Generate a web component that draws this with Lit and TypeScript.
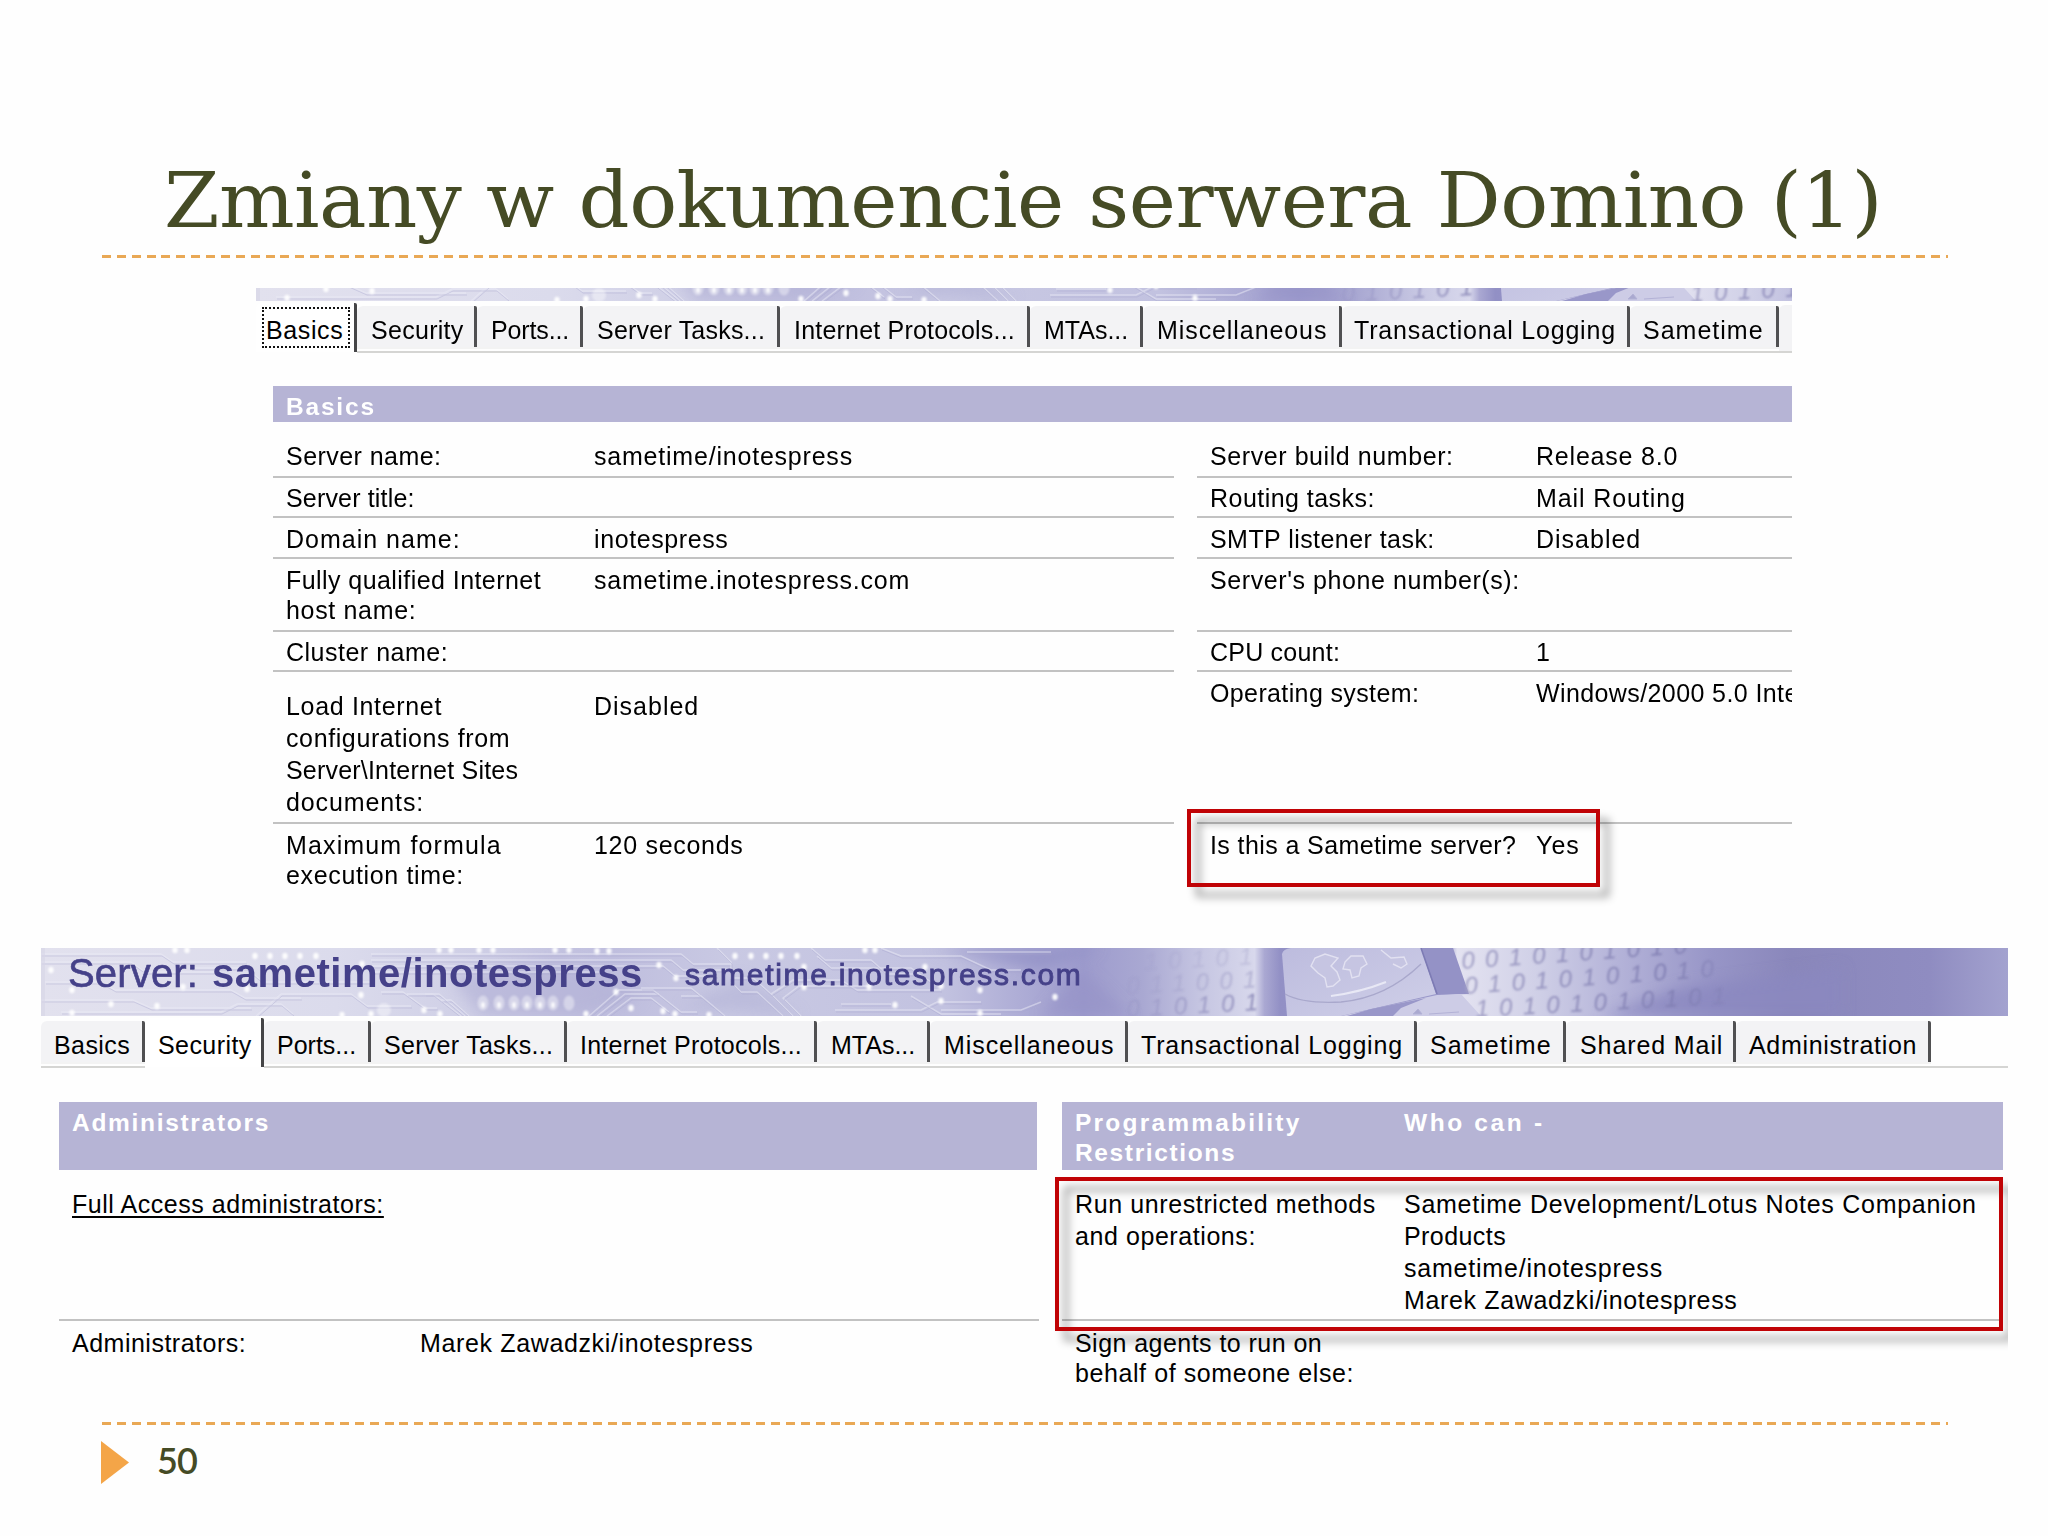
import { LitElement, html, svg, css, nothing } from "lit";
import { customElement, property } from "lit/decorators.js";
import { styleMap } from "lit/directives/style-map.js";

/** One line of text whose tracking is adjusted so that it spans `w` pixels. */
@customElement("fit-text")
class FitText extends LitElement {
  @property() text = "";
  @property({ type: Number }) w = 0;

  static styles = css`
    :host { display: block; white-space: pre; }
    .line { display: inline-block; }
  `;

  updated() {
    const el = this.renderRoot.querySelector(".line") as HTMLElement;
    el.style.letterSpacing = "0px";
    const natural = el.offsetWidth;
    const gaps = this.text.length - 1;
    if (this.w && gaps > 0) {
      el.style.letterSpacing = `${(this.w - natural) / gaps}px`;
      el.style.marginRight = `${-(this.w - natural) / gaps}px`;
    }
  }

  render() {
    return html`<span class="line" part="line">${this.text}</span>`;
  }
}

/** Decorative circuit-board banner; `top` and `span` choose the visible slice. */
@customElement("circuit-banner")
class CircuitBanner extends LitElement {
  @property({ type: Number }) top = 0;
  @property({ type: Number }) span = 1967;

  static styles = css`
    :host { display: block; }
    .art { display: block; width: 100%; height: 100%; }
    .digits { font: italic 24px "Liberation Sans", sans-serif; letter-spacing: 10.3px; }
  `;

  render() {
    const h = 68 - this.top;
    const dots: number[][] = [
      [214, 8], [229, 8], [244, 8], [259, 8], [275, 8], [134, 2], [146, 2], [10, 22], [70, 56], [116, 58],
      [31, 42], [31, 65], [142, 39], [321, 16], [206, 41], [320, 47], [330, 66], [383, 62], [399, 66], [301, 67],
      [398, 2], [410, 2], [438, 2], [452, 2], [514, 2], [528, 2], [556, 3], [568, 3], [618, 17], [635, 30],
      [575, 44], [590, 60], [622, 63], [634, 66], [694, 8], [710, 8], [725, 8], [740, 8], [756, 8],
      [824, 2], [834, 2], [884, 19], [763, 19], [763, 39], [828, 39], [854, 57], [900, 53], [900, 38], [939, 42],
      [939, 65], [1014, 49], [668, 67], [545, 66],
    ];
    const lines = [
      "M0 6H120L132 14H205", "M0 14H90L104 24H180", "M4 34H60L74 42H190L204 50H260", "M0 52H92L110 60H210",
      "M20 64H180L196 56H240L252 66", "M150 20H205L222 34H330", "M215 68L240 46H310L326 58H370",
      "M330 6H640L652 16H690", "M330 12H630L642 22H690", "M330 18H622L634 28H676", "M330 24H560L575 34",
      "M340 44H362L384 60H396", "M366 46H392L420 68", "M384 46H398L424 68", "M400 52H410L428 68",
      "M556 68L584 46H618", "M548 68L578 42H612L640 64H656", "M566 68L590 50H610L628 64", "M600 40H650L672 58",
      "M676 0L690 14V30H712L730 46", "M684 68L660 48H640", "M770 0L784 12H830L846 26H876",
      "M776 8L790 20H870L890 34", "M742 68L716 44H700L690 34", "M752 68L730 46L752 32H800L816 42H900",
      "M760 68L742 50L758 38H830", "M800 56H850", "M794 62H880L896 54H940", "M840 0L860 8H920L950 22H980",
      "M900 62H980L1000 54", "M926 4H1010", "M870 48L900 66H960",
    ];
    return svg`<svg class="art" viewBox="0 ${this.top} ${this.span} ${h}" preserveAspectRatio="none" aria-hidden="true">
      <defs>
        <linearGradient id="base" gradientUnits="userSpaceOnUse" x1="0" y1="0" x2="1967" y2="0">
          <stop offset="0" stop-color="#e2e1ee"/><stop offset=".15" stop-color="#dbdbec"/>
          <stop offset=".22" stop-color="#cfcfe6"/><stop offset=".29" stop-color="#bfbede"/>
          <stop offset=".35" stop-color="#c9c9e3"/><stop offset=".46" stop-color="#c2c2e0"/>
          <stop offset=".53" stop-color="#9d9bcd"/><stop offset=".56" stop-color="#a9a8d2"/>
          <stop offset=".59" stop-color="#c6c6e2"/><stop offset=".617" stop-color="#d8d8ec"/>
          <stop offset=".622" stop-color="#aaa8d2"/><stop offset=".63" stop-color="#9290c5"/>
          <stop offset=".715" stop-color="#9c9acb"/><stop offset=".72" stop-color="#e4e3f1"/>
          <stop offset=".76" stop-color="#d0d0e7"/><stop offset=".80" stop-color="#b5b4d9"/>
          <stop offset=".85" stop-color="#9795c7"/><stop offset=".89" stop-color="#8a87bb"/>
          <stop offset=".96" stop-color="#8f8cc1"/><stop offset="1" stop-color="#a3a2cf"/>
        </linearGradient>
        <linearGradient id="ink" gradientUnits="userSpaceOnUse" x1="1420" y1="0" x2="1720" y2="0">
          <stop offset="0" stop-color="#a3a1c6"/><stop offset=".7" stop-color="#8280b4"/>
          <stop offset="1" stop-color="#7d7bb0" stop-opacity="0"/>
        </linearGradient>
        <linearGradient id="ink2" gradientUnits="userSpaceOnUse" x1="1090" y1="0" x2="1220" y2="0">
          <stop offset="0" stop-color="#8683b8" stop-opacity=".2"/><stop offset="1" stop-color="#8f8dba"/>
        </linearGradient>
        <linearGradient id="card" x1="0" y1="0" x2="1" y2="1">
          <stop offset="0" stop-color="#bdbcde"/><stop offset="1" stop-color="#cfcfe8"/>
        </linearGradient>
        <filter id="soft" x="-20%" y="-50%" width="140%" height="200%"><feGaussianBlur stdDeviation="7"/></filter>
        <filter id="dot" x="-100%" y="-100%" width="300%" height="300%"><feGaussianBlur stdDeviation=".8"/></filter>
      </defs>
      <rect width="1967" height="68" fill="url(#base)"/>
      <g filter="url(#soft)">
        <path d="M410 30L520 10L600 50L540 68H440Z" fill="#b0afd6" opacity=".6"/>
        <path d="M640 60L700 30L760 68Z" fill="#b0afd6" opacity=".5"/>
        <path d="M890 0H1060L1000 22Z" fill="#8f8dc4" opacity=".7"/>
        <path d="M1000 68L1040 20L1090 68Z" fill="#9593c7" opacity=".6"/>
        <path d="M1560 68L1640 40L1800 20V68Z" fill="#8b88bf" opacity=".8"/>
      </g>
      <g fill="none" stroke="#ebebf6" stroke-width="1.5" opacity=".5">
        ${lines.map((d) => svg`<path d=${d}/>`)}
      </g>
      <g fill="none" stroke="#a9a8cf" stroke-width="1" opacity=".4" transform="translate(1 2)">
        ${lines.map((d) => svg`<path d=${d}/>`)}
      </g>
      <g fill="#fff" opacity=".4" filter="url(#dot)">
        ${[442, 458, 473, 486, 499, 512, 528].map((x) => svg`<ellipse cx=${x} cy="55" rx="5.5" ry="7.5"/>`)}
        <ellipse cx="343" cy="62" rx="7" ry="7"/>
      </g>
      <g fill="#fff" opacity=".92" filter="url(#dot)">
        ${dots.map(([x, y]) => svg`<ellipse cx=${x} cy=${y} rx="2.7" ry="3.2"/>`)}
        ${[442, 458, 473, 486, 499, 512].map((x) => svg`<ellipse cx=${x} cy="57" rx="1.8" ry="3"/>`)}
      </g>
      <path d="M1379 0H1412L1428 46L1396 47Z" fill="#9492c6"/>
      <path d="M1241 6Q1242 1 1250 0H1380L1395 46L1300 68H1246Z" fill="url(#card)"/>
      <path d="M1244 46Q1262 56 1300 54Q1345 50 1380 16" fill="none" stroke="#a9a8cc" stroke-width="1.3"/>
      <path d="M1290 48Q1320 44 1345 34" fill="none" stroke="#e8e8f5" stroke-width="2"/>
      <path d="M1270 18L1274 10L1284 6L1297 10L1290 18L1296 24L1299 32L1292 38L1286 39L1284 30L1277 25ZM1304 14L1310 8L1322 8L1326 16L1320 20L1318 28L1311 30L1309 22L1302 21ZM1340 2L1350 10L1363 9L1366 16L1360 20L1352 16" fill="#c6c5e2" stroke="#e2e1f1" stroke-width="1.4"/>
      <path d="M1380 0L1396 46" stroke="#7d7bb4" stroke-width="1.6"/>
      <path d="M1300 68L1396 47L1420 46L1440 68Z" fill="#cdcce6"/>
      <path d="M1306 68L1330 61L1385 50L1360 60L1352 68Z" fill="#9997c9"/>
      <path d="M1372 66l5-5 4 5zM1388 66l30-2" fill="#aaa9d0" stroke="#b3b2d6"/>
      <g class="digits" fill="url(#ink)" filter="url(#dot)">
        <text x="1421" y="21" transform="rotate(-4 1421 21)">0010101010</text>
        <text x="1424" y="46" transform="rotate(-4 1424 46)">01010101010</text>
        <text x="1435" y="69" transform="rotate(-3 1435 69)">10101010101</text>
      </g>
      <g class="digits" fill="url(#ink2)" filter="url(#dot)">
        <text x="1104" y="22" opacity=".3" transform="rotate(-3 1104 22)">10101</text>
        <text x="1086" y="46" opacity=".5" transform="rotate(-3 1086 46)">011001</text>
        <text x="1086" y="69" transform="rotate(-3 1086 69)">010101</text>
      </g>
      <path d="M0 0H4V68H0Z" fill="#d7d6e6" opacity=".6"/>
    </svg>`;
  }
}

interface Tab { label: string; x: number; w: number; end: number }
interface Cell { lines: [string, number][]; value?: [string, number][]; h: number; pad: number; loose?: boolean; link?: boolean; bare?: boolean }

const tab = (label: string, x: number, right: number, end: number): Tab => ({ label, x, w: right - x, end });

/** Row of property-sheet tabs; each tab ends at its divider. */
@customElement("tab-strip")
class TabStrip extends LitElement {
  @property({ attribute: false }) tabs: Tab[] = [];
  @property({ type: Number }) origin = 0;
  @property({ type: Number }) active = 0;
  @property({ type: Boolean }) focused = false;
  @property({ type: Boolean }) more = false;

  static styles = css`
    :host { display: flex; height: 53px; font: 25px/30px "Liberation Sans", Arial, sans-serif; color: #000; }
    .tab { box-sizing: border-box; flex: none; height: 53px; display: flex; flex-direction: column; }
    .face { box-sizing: border-box; height: 41px; margin-top: 5px; padding-top: 9px; background: #f3f3f5;
      border-right: 3px solid #505052; border-radius: 6px 2px 0 0; }
    .foot { height: 2px; margin-top: 4px; background: #d5d5d3; box-shadow: 0 -4px 0 #f3f3f3; }
    .active .face { background: #fff; height: 49px; margin-top: 2px; padding-top: 12px; border-right-color: #454547; }
    .active .foot { display: none; }
    .focus .face { position: relative; }
    .focus .face::after { content: ""; position: absolute; left: 6px; top: 4px; width: 84px; height: 37px; border: 2px dotted #111; }
    .rest { flex: 1; display: flex; flex-direction: column; }
    .rest .pad { height: 50px; }
    .rest .line { height: 2px; background: #d5d5d3; }
    .rest.more .pad { background: #f3f3f5; height: 46px; margin-top: 4px; border-radius: 6px 0 0 0; }
  `;

  render() {
    let start = this.origin;
    return html`${this.tabs.map((t, i) => {
      const left = t.x - 1 - start;
      const width = t.end - start;
      start = t.end;
      const on = i === this.active;
      return html`<div class="tab ${on ? "active" : ""} ${on && this.focused ? "focus" : ""}" style=${styleMap({ width: `${width}px` })}>
        <div class="face" style=${styleMap({ paddingLeft: `${left}px` })}><fit-text .text=${t.label} .w=${t.w + 2}></fit-text></div>
        <div class="foot"></div>
      </div>`;
    })}<div class="rest ${this.more ? "more" : ""}"><div class="pad"></div><div class="line"></div></div>`;
  }
}

/** Column of label/value rows separated by thin rules. */
@customElement("field-list")
class FieldList extends LitElement {
  @property({ attribute: false }) rows: Cell[] = [];
  @property({ type: Number }) labelWidth = 300;

  static styles = css`
    :host { display: flex; flex-direction: column; font: 25px/30.5px "Liberation Sans", Arial, sans-serif; color: #000; }
    .row { box-sizing: border-box; flex: none; display: flex; padding-left: 13px; border-bottom: 2px solid #c2c2c2; }
    .loose { line-height: 32px; }
    .bare { border-bottom-color: transparent; }
    .label { flex: none; }
    .link fit-text::part(line) { text-decoration: underline; text-decoration-thickness: 2px; text-underline-offset: 3px; text-decoration-skip-ink: none; }
  `;

  render() {
    const block = (l?: [string, number][]) => l ? l.map(([t, w]) => html`<fit-text .text=${t} .w=${w + 2}></fit-text>`) : nothing;
    return html`${this.rows.map((r) => html`
      <div class="row ${r.loose ? "loose" : ""} ${r.bare ? "bare" : ""}" style=${styleMap({ height: `${r.h}px`, paddingTop: `${r.pad}px` })}>
        <div class="label ${r.link ? "link" : ""}" style=${styleMap({ width: `${this.labelWidth}px` })}>${block(r.lines)}</div>
        <div>${block(r.value)}</div>
      </div>`)}`;
  }
}

const BASICS_TABS = [
  tab("Basics", 267, 342, 357), tab("Security", 372, 462, 477), tab("Ports...", 492, 568, 583),
  tab("Server Tasks...", 598, 764, 780), tab("Internet Protocols...", 795, 1014, 1030), tab("MTAs...", 1045, 1127, 1143),
  tab("Miscellaneous", 1158, 1325, 1342), tab("Transactional Logging", 1355, 1614, 1630), tab("Sametime", 1644, 1762, 1779),
];

const SECURITY_TABS = [
  tab("Basics", 55, 129, 145), tab("Security", 159, 250, 264), tab("Ports...", 278, 355, 371),
  tab("Server Tasks...", 385, 552, 567), tab("Internet Protocols...", 581, 801, 817), tab("MTAs...", 832, 914, 930),
  tab("Miscellaneous", 945, 1112, 1128), tab("Transactional Logging", 1142, 1401, 1417), tab("Sametime", 1431, 1550, 1566),
  tab("Shared Mail", 1581, 1721, 1736), tab("Administration", 1750, 1915, 1931),
];

const BASICS_LEFT: Cell[] = [
  { lines: [["Server name:", 153]], value: [["sametime/inotespress", 256]], h: 56, pad: 19 },
  { lines: [["Server title:", 126]], h: 40, pad: 5 },
  { lines: [["Domain name:", 172]], value: [["inotespress", 132]], h: 41, pad: 6 },
  { lines: [["Fully qualified Internet", 253], ["host name:", 128]], value: [["sametime.inotespress.com", 313]], h: 73, pad: 5.5 },
  { lines: [["Cluster name:", 160]], h: 40, pad: 5 },
  { lines: [["Load Internet", 153], ["configurations from", 222], ["Server\\Internet Sites", 230], ["documents:", 135]],
    value: [["Disabled", 102]], h: 152, pad: 18, loose: true },
  { lines: [["Maximum formula", 213], ["execution time:", 175]], value: [["120 seconds", 147]], h: 76, pad: 5.5, bare: true },
];

const BASICS_RIGHT: Cell[] = [
  { lines: [["Server build number:", 241]], value: [["Release 8.0", 139]], h: 56, pad: 19 },
  { lines: [["Routing tasks:", 162]], value: [["Mail Routing", 147]], h: 40, pad: 5 },
  { lines: [["SMTP listener task:", 222]], value: [["Disabled", 102]], h: 41, pad: 6 },
  { lines: [["Server's phone number(s):", 307]], h: 73, pad: 5.5 },
  { lines: [["CPU count:", 128]], value: [["1", 8]], h: 40, pad: 5 },
  { lines: [["Operating system:", 207]], value: [["Windows/2000 5.0 Inte", 260]], h: 152, pad: 6 },
  { lines: [["Is this a Sametime server?", 304]], value: [["Yes", 41]], h: 76, pad: 5.5, bare: true },
];

const ADMIN_LEFT: Cell[] = [
  { lines: [["Full Access administrators:", 309]], h: 151, pad: 18, loose: true, link: true },
  { lines: [["Administrators:", 172]], value: [["Marek Zawadzki/inotespress", 331]], h: 76, pad: 7, bare: true },
];

const ADMIN_RIGHT: Cell[] = [
  { lines: [["Run unrestricted methods", 298], ["and operations:", 178]],
    value: [["Sametime Development/Lotus Notes Companion", 570], ["Products", 100], ["sametime/inotespress", 256], ["Marek Zawadzki/inotespress", 331]],
    h: 151, pad: 18, loose: true },
  { lines: [["Sign agents to run on", 245], ["behalf of someone else:", 276]], h: 76, pad: 6.5, bare: true },
];

@customElement("app-root")
class AppRoot extends LitElement {
  static styles = css`
    :host { display: block; width: 2048px; height: 1536px; overflow: hidden; background: #fefefe; }
    .slide { position: relative; display: flex; flex-direction: column; width: 2048px; height: 1536px; }
    .title { margin: 0; height: 255px; box-sizing: border-box; padding: 156px 0 0 164px;
      font: 400 76px/90px "DejaVu Serif", serif; color: #454b25; }
    .title fit-text { transform: scaleX(1.05); transform-origin: 0 0; }
    .rule { flex: none; width: 1846px; height: 3px; margin-left: 102px;
      background: repeating-linear-gradient(90deg, #e9a855 0 9px, transparent 9px 14.87px); }
    .shot { flex: none; overflow: hidden; }
    .first { width: 1536px; height: 612px; margin: 30px 0 0 256px; }
    .second { position: relative; width: 1967px; height: 450px; margin: 48px 0 0 41px; }
    .strip { height: 13px; }
    .bar { background: #b6b4d5; color: #fff; font: 700 24.5px/30px "Liberation Sans", Arial, sans-serif; box-sizing: border-box; }
    .first .bar { height: 36px; margin: 32px 0 0 17px; padding: 6px 0 0 13px; }
    .pair { display: flex; }
    .first .pair { gap: 23px; margin-left: 17px; }
    .first .left { width: 901px; flex: none; }
    .first .right { width: 595px; flex: none; }
    .head { position: relative; height: 68px; }
    .art { height: 68px; }
    .caption { position: absolute; inset: 0; display: flex; color: #454189; font-family: "Liberation Sans", Arial, sans-serif; }
    .kind { font-size: 40px; line-height: 46px; width: 171px; padding: 2px 0 0 27px; box-sizing: border-box; flex: none; -webkit-text-stroke: .6px #454189; }
    .name { font-size: 40px; line-height: 46px; width: 445px; padding-top: 2px; font-weight: 700; flex: none; }
    .host { font-size: 30px; line-height: 34px; padding-top: 10px; margin-left: 28px; -webkit-text-stroke: .9px #454189; }
    .bars { display: flex; margin: 33px 0 0 18px; gap: 25px; }
    .bars .bar { height: 68px; padding: 6px 0 0 13px; }
    .a { width: 978px; }
    .b { width: 941px; display: flex; }
    .b .what { width: 329px; flex: none; }
    .second .pair { margin-left: 18px; gap: 23px; }
    .second .left { width: 980px; flex: none; }
    .second .right { width: 941px; flex: none; }
    .mark { position: absolute; box-sizing: border-box; border: 4px solid #c00306; filter: drop-shadow(9px 10px 4px rgba(0, 0, 0, .4)); }
    .mark-a { left: 1187px; top: 809px; width: 413px; height: 78px; }
    .mark-b { left: 1014px; top: 229px; width: 948px; height: 154px; }
    .lower { margin-top: 24px; }
    .footer { display: flex; align-items: flex-start; padding: 16px 0 0 101px; gap: 28px; }
    .arrow { width: 28px; height: 43px; flex: none; }
    .page { font: 600 36px/43px Lato, sans-serif; color: #454b25; margin-top: -2px; }
  `;

  render() {
    return html`
      <main class="slide">
        <h1 class="title"><fit-text text="Zmiany w dokumencie serwera Domino (1)" .w=${1637}></fit-text></h1>
        <div class="rule"></div>

        <section class="shot first">
          <circuit-banner class="strip" .top=${55} .span=${1536}></circuit-banner>
          <tab-strip .tabs=${BASICS_TABS} .origin=${256} .active=${0} focused more></tab-strip>
          <div class="bar"><fit-text text="Basics" .w=${88}></fit-text></div>
          <div class="pair">
            <field-list class="left" .rows=${BASICS_LEFT} .labelWidth=${308}></field-list>
            <field-list class="right" .rows=${BASICS_RIGHT} .labelWidth=${326}></field-list>
          </div>
        </section>

        <section class="shot second">
          <div class="head">
            <circuit-banner class="art"></circuit-banner>
            <div class="caption">
              <fit-text class="kind" text="Server:" .w=${130}></fit-text>
              <fit-text class="name" text="sametime/inotespress" .w=${430}></fit-text>
              <fit-text class="host" text="sametime.inotespress.com" .w=${396}></fit-text>
            </div>
          </div>
          <tab-strip .tabs=${SECURITY_TABS} .origin=${41} .active=${1}></tab-strip>
          <div class="bars">
            <div class="bar a"><fit-text text="Administrators" .w=${196}></fit-text></div>
            <div class="bar b">
              <div class="what">
                <fit-text text="Programmability" .w=${224}></fit-text>
                <fit-text text="Restrictions" .w=${160}></fit-text>
              </div>
              <fit-text text="Who can -" .w=${138}></fit-text>
            </div>
          </div>
          <div class="pair">
            <field-list class="left" .rows=${ADMIN_LEFT} .labelWidth=${348}></field-list>
            <field-list class="right" .rows=${ADMIN_RIGHT} .labelWidth=${329}></field-list>
          </div>
          <div class="mark mark-b"></div>
        </section>

        <div class="rule lower"></div>
        <footer class="footer">
          <svg class="arrow" viewBox="0 0 28 43" aria-hidden="true"><path d="M0 0L28 21.5L0 43Z" fill="#f4a548"/></svg>
          <fit-text class="page" text="50" .w=${41}></fit-text>
        </footer>

        <div class="mark mark-a"></div>
      </main>
    `;
  }
}
